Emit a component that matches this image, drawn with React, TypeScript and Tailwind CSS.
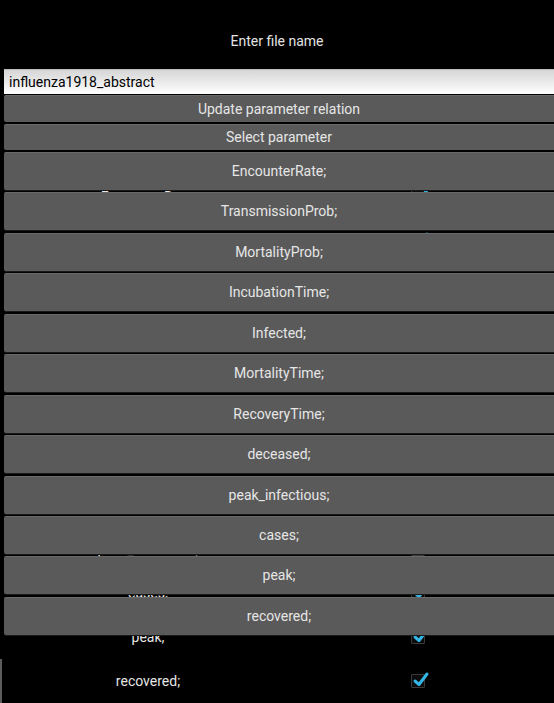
import React from "react";

const params = [
  "EncounterRate;",
  "TransmissionProb;",
  "MortalityProb;",
  "IncubationTime;",
  "Infected;",
  "MortalityTime;",
  "RecoveryTime;",
  "deceased;",
  "peak_infectious;",
  "cases;",
  "peak;",
  "recovered;",
];

const CheckBox = () => (
  <div className="relative w-[14px] h-[14px] border border-[#3a3a3a] bg-[#0c0c0c] rounded-[1px]">
    <svg className="absolute -top-[5px] -left-[1px]" width="20" height="18" viewBox="0 0 20 18" fill="none">
      <path d="M4 11 L8 14.5 L16 4" stroke="#33b5e5" strokeWidth="3" strokeLinecap="round" strokeLinejoin="round" />
    </svg>
  </div>
);

const App = () => {
  return (
    <div className="relative w-[554px] h-[703px] bg-black overflow-hidden font-['Roboto',sans-serif] text-[14px]">
      <div className="h-[69px] pt-[13px] flex items-center justify-center text-[#e4e4e4]">Enter file name</div>
      <div className="ml-[4px] h-[25px] flex items-center pl-[5px] bg-gradient-to-b from-[#d6d6d6] to-white text-black border-t border-[#bcbcbc]">
        influenza1918_abstract
      </div>
      <div className="ml-[4px] mt-[1px] h-[27px] flex items-center justify-center bg-[#5a5a5a] border-t border-[#6a6a6a] text-[#e6e6e6] rounded-l-[2px]">
        Update parameter relation
      </div>
      <div className="ml-[4px] mt-[2px] h-[26px] flex items-center justify-center bg-[#5a5a5a] border-t border-[#6a6a6a] text-[#e6e6e6] rounded-l-[2px]">
        Select parameter
      </div>
      <div className="mt-[25px] flex flex-col">
        {params.map((p, i) => (
          <div
            key={p}
            className={
              i === params.length - 1
                ? "h-[44px] flex items-center border-l-2 border-[#5c5c5c]"
                : "h-[44px] flex items-center border-l-2 border-black"
            }
          >
            <div className="w-[292px] text-center text-[#e6e6e6]">{p}</div>
            <div className="ml-[117px]">
              <CheckBox />
            </div>
          </div>
        ))}
      </div>

      <div className="absolute top-[152px] left-[4px] right-0 flex flex-col gap-[2.45px]">
        {params.map((p) => (
          <div
            key={p}
            className="h-[38px] flex items-center justify-center bg-[#5a5a5a] border-t border-[#6a6a6a] rounded-l-[2px] text-[#e6e6e6] shadow-[0_1px_0_#1a1a1a]"
          >
            {p}
          </div>
        ))}
      </div>
    </div>
  );
};

export default App;
